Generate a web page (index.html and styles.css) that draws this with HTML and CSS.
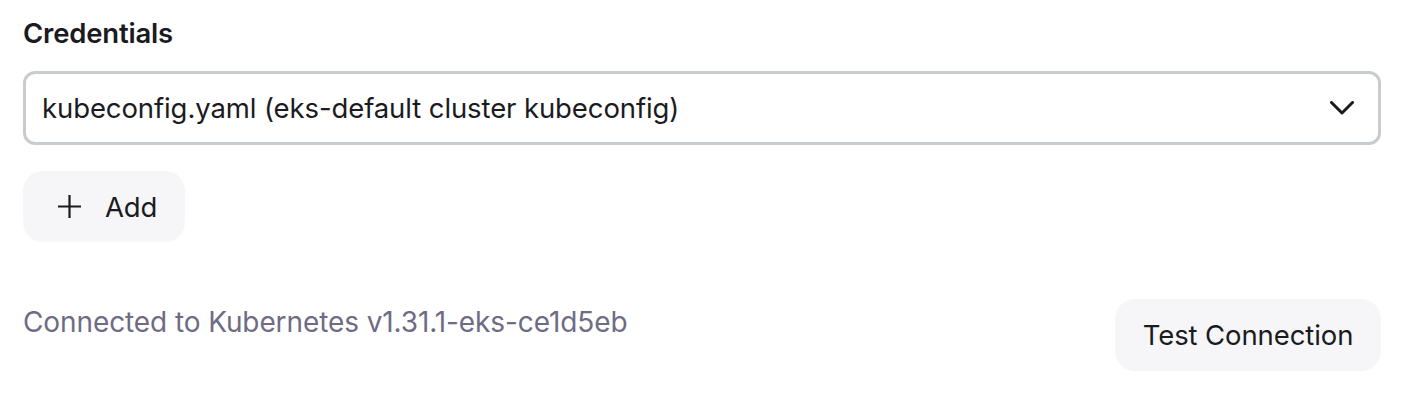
FILE: index.html
```html
<!DOCTYPE html>
<html>
<head>
<meta charset="utf-8">
<link rel="stylesheet" href="styles.css">
</head>
<body>
<div class="panel">
  <div class="label">Credentials</div>
  <div class="select">
    <span class="select-text">kubeconfig.yaml (eks-default cluster kubeconfig)</span>
    <svg class="chev" width="24" height="14" viewBox="0 0 24 14"><path d="M1.5 1.5 L12 12 L22.5 1.5" fill="none" stroke="#1b1b1f" stroke-width="3" stroke-linecap="round" stroke-linejoin="round"/></svg>
  </div>
  <div class="add-row">
    <button class="btn add">
      <svg width="23" height="23" viewBox="0 0 23 23"><path d="M11.5 0 V23 M0 11.5 H23" stroke="#1b1b1f" stroke-width="2.2"/></svg>
      <span>Add</span>
    </button>
  </div>
  <div class="footer">
    <span class="status">Connected to Kubernetes v1.31.1-eks-ce1d5eb</span>
    <button class="btn test">Test Connection</button>
  </div>
</div>
</body>
</html>
```

FILE: styles.css
```css
html, body {
  margin: 0;
  padding: 0;
  background: #ffffff;
}
body {
  font-family: Inter, "Noto Sans", sans-serif;
  color: #1b1b1f;
}
.panel {
  width: 1358px;
  padding: 16px 0 0 23px;
  display: flex;
  flex-direction: column;
}
.label {
  font-size: 27.5px;
  font-weight: 600;
  line-height: 34px;
  letter-spacing: -0.2px;
}
.select {
  margin-top: 21px;
  height: 74px;
  box-sizing: border-box;
  border: 3px solid #c9cccf;
  border-radius: 12px;
  display: flex;
  align-items: center;
  justify-content: space-between;
  padding: 0 24px 0 16px;
}
.select-text {
  font-size: 27.5px;
  letter-spacing: -0.1px;
}
.chev {
  display: block;
}
.add-row {
  margin-top: 26px;
  display: flex;
}
.btn {
  font-family: inherit;
  color: #1b1b1f;
  background: #f6f6f8;
  border: none;
  border-radius: 20px;
  display: flex;
  align-items: center;
  font-size: 27.5px;
  letter-spacing: -0.1px;
}
.add {
  width: 162px;
  height: 71px;
  padding: 0 0 0 35px;
  gap: 24px;
}
.add svg {
  display: block;
}
.footer {
  margin-top: 57px;
  display: flex;
  justify-content: space-between;
  align-items: center;
}
.status {
  font-size: 28px;
  color: #6e6c84;
  letter-spacing: -0.1px;
  margin-top: -26px;
}
.test {
  width: 266px;
  height: 72px;
  justify-content: center;
}
```
